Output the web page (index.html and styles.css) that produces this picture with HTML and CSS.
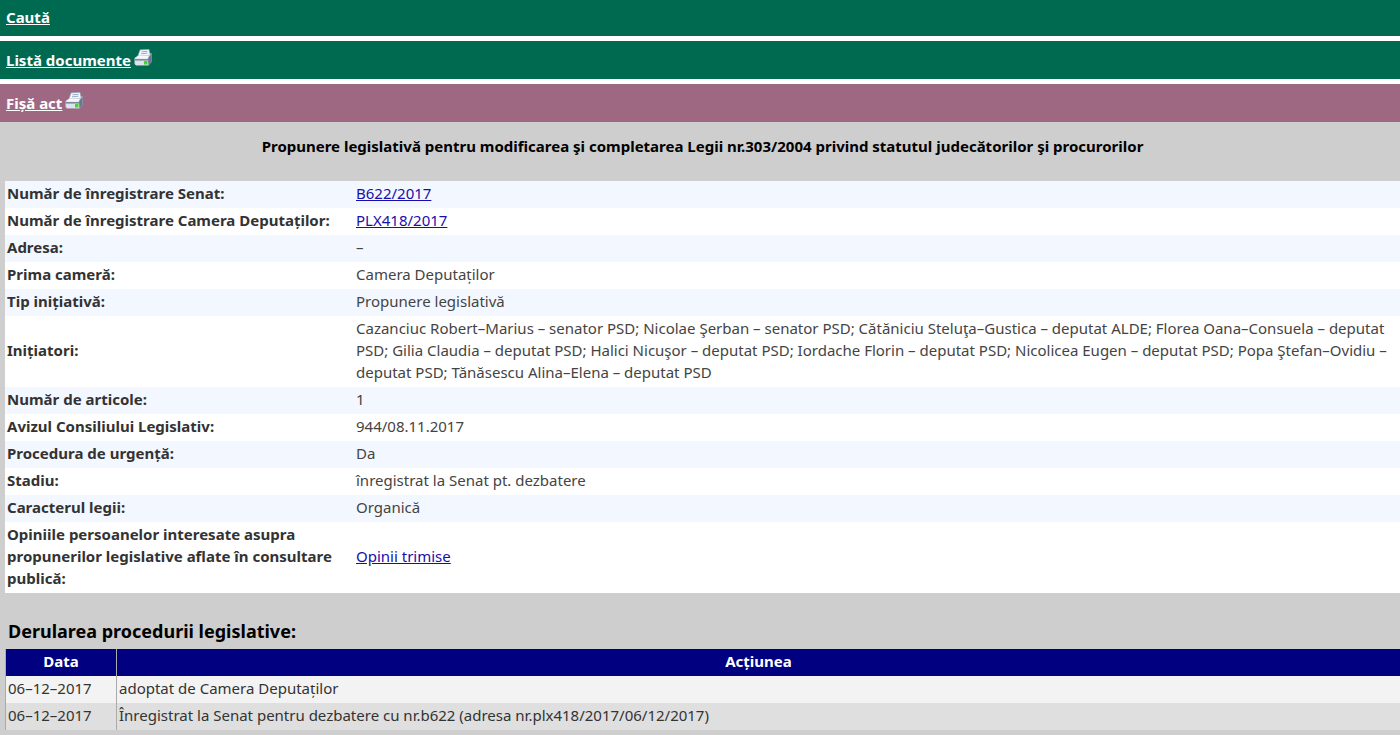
FILE: index.html
```html
<!DOCTYPE html>
<html lang="ro">
<head>
  <meta charset="UTF-8">
  <meta name="viewport" content="width=device-width, initial-scale=1.0">
  <title>Fișă act</title>
  <link rel="stylesheet" href="styles.css">
</head>
<body>
  <svg class="defs" width="0" height="0" aria-hidden="true">
    <symbol id="printer" viewBox="0 0 18 18">
      <path d="M6 .8 15 .3 16.5 7 3.5 8z" fill="#f4f7fc" stroke="#8295ab" stroke-width=".6"/>
      <path d="M7.5 2.8l6-.5M7 4.8l6.5-.6" stroke="#8fa4bf" stroke-width=".9"/>
      <path d="M.5 9 4 6.5 14 6 17.5 4V13l-3 3.5H2L.5 15z" fill="#ccd3df"/>
      <path d="M1 9.5 4 7h10.5l-1 2.8z" fill="#f6f8fb"/>
      <path d="M14 9.5 17.5 4v9l-3 3.5z" fill="#69798d"/>
      <path d="M.5 10H14v1.5H.5z" fill="#7c8b9d"/>
      <path d="M1 12h13v4H2z" fill="#dde4ec"/>
      <path d="M10 12h3.5v3.5H10z" fill="#43d62d"/>
    </symbol>
  </svg>

  <div class="bar"><a href="#">Caută</a></div>
  <div class="bar">
    <a href="#">Listă documente</a>
    <a href="#" class="print" aria-label="Tipărire listă"><svg width="18" height="18"><use href="#printer"/></svg></a>
  </div>
  <div class="bar active">
    <a href="#">Fișă act</a>
    <a href="#" class="print" aria-label="Tipărire fișă"><svg width="18" height="18"><use href="#printer"/></svg></a>
  </div>

  <div class="content">
    <h1>Propunere legislativă pentru modificarea şi completarea Legii nr.303/2004 privind statutul judecătorilor şi procurorilor</h1>

    <table class="details">
      <tr><th scope="row">Număr de înregistrare Senat:</th><td><a href="#">B622/2017</a></td></tr>
      <tr><th scope="row">Număr de înregistrare Camera Deputaților:</th><td><a href="#">PLX418/2017</a></td></tr>
      <tr><th scope="row">Adresa:</th><td>–</td></tr>
      <tr><th scope="row">Prima cameră:</th><td>Camera Deputaților</td></tr>
      <tr><th scope="row">Tip inițiativă:</th><td>Propunere legislativă</td></tr>
      <tr><th scope="row">Inițiatori:</th><td>Cazanciuc Robert–Marius – senator PSD; Nicolae Şerban – senator PSD; Cătăniciu Steluţa–Gustica – deputat ALDE; Florea Oana–Consuela – deputat PSD; Gilia Claudia – deputat PSD; Halici Nicuşor – deputat PSD; Iordache Florin – deputat PSD; Nicolicea Eugen – deputat PSD; Popa Ştefan–Ovidiu – deputat PSD; Tănăsescu Alina–Elena – deputat PSD</td></tr>
      <tr><th scope="row">Număr de articole:</th><td>1</td></tr>
      <tr><th scope="row">Avizul Consiliului Legislativ:</th><td>944/08.11.2017</td></tr>
      <tr><th scope="row">Procedura de urgență:</th><td>Da</td></tr>
      <tr><th scope="row">Stadiu:</th><td>înregistrat la Senat pt. dezbatere</td></tr>
      <tr><th scope="row">Caracterul legii:</th><td>Organică</td></tr>
      <tr><th scope="row">Opiniile persoanelor interesate asupra propunerilor legislative aflate în consultare publică:</th><td><a href="#">Opinii trimise</a></td></tr>
    </table>

    <h2>Derularea procedurii legislative:</h2>
    <table class="history">
      <thead>
        <tr><th scope="col" class="date">Data</th><th scope="col">Acțiunea</th></tr>
      </thead>
      <tbody>
        <tr><td>06–12–2017</td><td>adoptat de Camera Deputaților</td></tr>
        <tr><td>06–12–2017</td><td>Înregistrat la Senat pentru dezbatere cu nr.b622 (adresa nr.plx418/2017/06/12/2017)</td></tr>
      </tbody>
    </table>
  </div>
</body>
</html>
```
FILE: styles.css
```css
body {
  margin: 0;
  background-color: #cecece;
  color: #333;
  font-family: "Noto Sans", "Open Sans", sans-serif;
  font-size: 15px;
  line-height: 22px;
  font-feature-settings: "locl" 0;
}

.defs {
  position: absolute;
}

.bar {
  display: flex;
  gap: 3px;
  padding: 8px 6px;
  background-color: #006a51;
  border-bottom: 5px solid #fff;
  font-weight: bold;
}

.bar:first-of-type {
  padding-top: 6px;
}

.bar a {
  color: #fff;
}

.bar .print svg {
  display: block;
}

.bar.active {
  background-color: #9e6883;
  border-bottom: 0;
}

.content {
  padding-left: 5px;
}

h1 {
  margin: 0;
  padding: 13px 0 24px;
  color: #000;
  font-size: 15px;
  line-height: 22px;
  text-align: center;
}

table {
  width: 100%;
  border-collapse: collapse;
}

td,
th {
  padding: 1px 2px 4px;
}

.details tr {
  background-color: #fff;
}

.details tr:nth-child(odd) {
  background-color: #f3f7ff;
}

.details td {
  color: #444;
}

.details th {
  width: 345px;
  text-align: left;
}

.details a {
  color: #1a0dab;
}

h2 {
  margin: 0;
  padding: 26px 3px 6px;
  color: #000;
  font-size: 18px;
  line-height: 24px;
}

.history td,
.history th {
  border-left: 1px solid #aaa;
}

.history th {
  background-color: #000080;
  color: #fff;
}

.history .date {
  width: 106px;
}

.history tbody tr {
  background-color: #f3f3f3;
}

.history tbody tr:nth-child(even) {
  background-color: #dfdfdf;
}
```
